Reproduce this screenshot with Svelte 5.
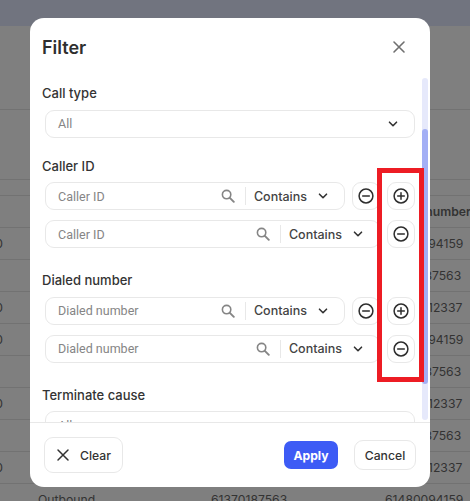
<script>
  const rows = [
    { h: 84 },
    { h: 70 },
    { h: 16 },
    { b: 'Called number', h: 32, head: true },
    { time: '0', b: '61480094159', h: 32 },
    { b: '61370187563', h: 32 },
    { time: '0', b: '61390012337', h: 32 },
    { time: '0', b: '61480094159', h: 32 },
    { b: '61370187563', h: 32 },
    { time: '0', b: '61390012337', h: 32 },
    { b: '61370187563', h: 32 },
    { time: '0', b: '61390012337', h: 32 },
    { type: 'Outbound', a: '61370187563', b: '61480094159', h: 32 }
  ];

  const groups = [
    { label: 'Caller ID', placeholder: 'Caller ID' },
    { label: 'Dialed number', placeholder: 'Dialed number' }
  ];
</script>

{#snippet chevron()}
  <svg class="chevron" width="12" height="12" viewBox="0 0 12 12" fill="none">
    <path d="M2.5 4.2 6 7.7l3.5-3.5" stroke="#333" stroke-width="1.6" stroke-linecap="round" stroke-linejoin="round" />
  </svg>
{/snippet}

{#snippet search()}
  <svg class="search" width="14" height="14" viewBox="0 0 14 14" fill="none">
    <circle cx="5.6" cy="5.6" r="4.2" stroke="#858585" stroke-width="1.6" />
    <path d="m8.8 8.8 4 4" stroke="#858585" stroke-width="1.9" stroke-linecap="round" />
  </svg>
{/snippet}

{#snippet circleButton(plus)}
  <button class="round" aria-label={plus ? 'Add' : 'Remove'}>
    <svg width="16" height="16" viewBox="0 0 16 16" fill="none">
      <circle cx="8" cy="8" r="6.9" stroke="#2e2e2e" stroke-width="1.5" />
      <path d="M4.7 8h6.6" stroke="#2e2e2e" stroke-width="1.5" stroke-linecap="round" />
      {#if plus}
        <path d="M8 4.7v6.6" stroke="#2e2e2e" stroke-width="1.5" stroke-linecap="round" />
      {/if}
    </svg>
  </button>
{/snippet}

{#snippet filterInput(placeholder)}
  <div class="field">
    <input {placeholder} />
    {@render search()}
    <span class="divider"></span>
    <span class="mode">Contains</span>
    {@render chevron()}
  </div>
{/snippet}

<div class="page">
  <div class="topbar"></div>
  <div class="table">
    {#each rows as row}
      <div class="row" class:head={row.head} style="height: {row.h}px">
        <span class="time">{row.time ?? ''}</span>
        <span class="type">{row.type ?? ''}</span>
        <span>{row.a ?? ''}</span>
        <span>{row.b ?? ''}</span>
      </div>
    {/each}
  </div>

  <div class="modal">
    <header>
      <h2>Filter</h2>
      <button class="close" aria-label="Close">
        <svg width="14" height="14" viewBox="0 0 14 14" fill="none">
          <path d="m2 2 10 10M12 2 2 12" stroke="#707070" stroke-width="1.6" stroke-linecap="round" />
        </svg>
      </button>
    </header>

    <div class="body">
      <section>
        <h3>Call type</h3>
        <div class="select">
          <span>All</span>
          {@render chevron()}
        </div>
      </section>

      {#each groups as group}
        <section class="group">
          <h3>{group.label}</h3>
          <div class="line">
            {@render filterInput(group.placeholder)}
            {@render circleButton(false)}
            {@render circleButton(true)}
          </div>
          <div class="line">
            {@render filterInput(group.placeholder)}
            {@render circleButton(false)}
          </div>
        </section>
      {/each}

      <section>
        <h3>Terminate cause</h3>
        <div class="select">
          <span>All</span>
          {@render chevron()}
        </div>
      </section>

      <div class="track"><div class="thumb"></div></div>
    </div>

    <footer>
      <button class="clear">
        <svg width="14" height="14" viewBox="0 0 14 14" fill="none">
          <path d="m2 2 10 10M12 2 2 12" stroke="#333" stroke-width="1.5" stroke-linecap="round" />
        </svg>
        Clear
      </button>
      <button class="apply">Apply</button>
      <button class="cancel">Cancel</button>
    </footer>
  </div>

  <div class="highlight"></div>
</div>

<style>
  :global(body) {
    margin: 0;
  }

  .page {
    position: relative;
    width: 470px;
    height: 501px;
    overflow: hidden;
    background: #7f7f7f;
    font-family: Inter, "Liberation Sans", sans-serif;
    color: #333;
  }

  .topbar {
    height: 26px;
    background: #71747f;
  }

  .table {
    display: flex;
    flex-direction: column;
  }

  .row {
    display: grid;
    grid-template-columns: 3px 208px 174px 1fr;
    flex: none;
    box-sizing: border-box;
    align-items: center;
    border-bottom: 1px solid #727272;
    font-size: 12.2px;
    color: #333;
  }

  .row.head {
    font-weight: 600;
  }

  .row span {
    white-space: nowrap;
    overflow: hidden;
  }

  .time {
    direction: rtl;
  }

  .type {
    padding-left: 35px;
  }

  .modal {
    position: absolute;
    left: 30px;
    top: 18px;
    width: 400px;
    height: 469px;
    display: flex;
    flex-direction: column;
    background: #fff;
    border-radius: 14px;
    overflow: hidden;
  }

  header {
    display: flex;
    align-items: center;
    justify-content: space-between;
    height: 58px;
    padding: 0 24px 0 12px;
    flex: none;
  }

  h2 {
    margin: 0;
    font-size: 18px;
    font-weight: 600;
    color: #2f2f2f;
  }

  .close {
    display: flex;
    padding: 0;
    border: none;
    background: none;
  }

  .body {
    position: relative;
    flex: 1;
    min-height: 0;
    overflow: hidden;
    padding: 9px 15px 0 12px;
  }

  section {
    margin-bottom: 20px;
  }

  section.group {
    margin-bottom: 24px;
  }

  h3 {
    margin: 0 0 8.5px;
    height: 16px;
    line-height: 16px;
    font-size: 13px;
    font-weight: 500;
    color: #333;
  }

  .select,
  .field {
    display: flex;
    align-items: center;
    box-sizing: border-box;
    height: 28px;
    border: 1px solid #e8e8e8;
    border-radius: 9px;
    background: #fff;
  }

  .select {
    justify-content: space-between;
    margin-left: 3px;
    padding: 0 15px 0 12px;
    font-family: Roboto, sans-serif;
    font-size: 12.5px;
    color: #858585;
  }

  .line {
    display: flex;
    gap: 7px;
    margin: 0 0 10px 3px;
  }

  .line:last-child {
    margin-bottom: 0;
  }

  .field {
    flex: 1;
    min-width: 0;
    padding: 0 15px 0 12px;
  }

  input {
    flex: 1;
    min-width: 0;
    padding: 0;
    border: none;
    outline: none;
    font: 12.5px Roboto, sans-serif;
  }

  input::placeholder {
    color: #858585;
    opacity: 1;
  }

  .search {
    flex: none;
    margin-right: 10px;
  }

  .divider {
    flex: none;
    width: 1px;
    height: 18px;
    margin-right: 8px;
    background: #e8e8e8;
  }

  .mode {
    flex: none;
    margin-right: 10px;
    font-size: 12.5px;
    font-weight: 500;
    color: #444;
  }

  .chevron {
    flex: none;
  }

  .round {
    flex: none;
    display: flex;
    align-items: center;
    justify-content: center;
    box-sizing: border-box;
    width: 28px;
    height: 28px;
    padding: 0;
    border: 1px solid #e8e8e8;
    border-radius: 9px;
    background: #fff;
  }

  .track {
    position: absolute;
    top: 2px;
    right: 2px;
    width: 6px;
    height: 342px;
    border-radius: 3px;
    background: #e6e9fb;
  }

  .thumb {
    margin-top: 51px;
    height: 255px;
    border-radius: 3px;
    background: #a3aff5;
  }

  footer {
    display: flex;
    align-items: center;
    flex: none;
    height: 65px;
    box-sizing: border-box;
    padding: 0 14px;
    border-top: 1px solid #e8e8e8;
  }

  footer button {
    font: 500 12.2px Inter, "Liberation Sans", sans-serif;
    color: #333;
    background: #fff;
    border: 1px solid #e8e8e8;
    padding: 0;
  }

  .clear {
    display: flex;
    align-items: center;
    justify-content: center;
    gap: 10px;
    width: 79px;
    height: 36px;
    border-radius: 9px;
    margin-right: auto;
  }

  footer .apply {
    width: 54px;
    height: 28px;
    margin-right: 16px;
    border: none;
    border-radius: 7px;
    background: #3d5bf5;
    color: #fff;
    font-weight: 700;
  }

  .cancel {
    width: 62px;
    height: 30px;
    border-radius: 9px;
  }

  .highlight {
    position: absolute;
    left: 377px;
    top: 168px;
    width: 47px;
    height: 214px;
    box-sizing: border-box;
    border: 5px solid #ed1c24;
  }
</style>
